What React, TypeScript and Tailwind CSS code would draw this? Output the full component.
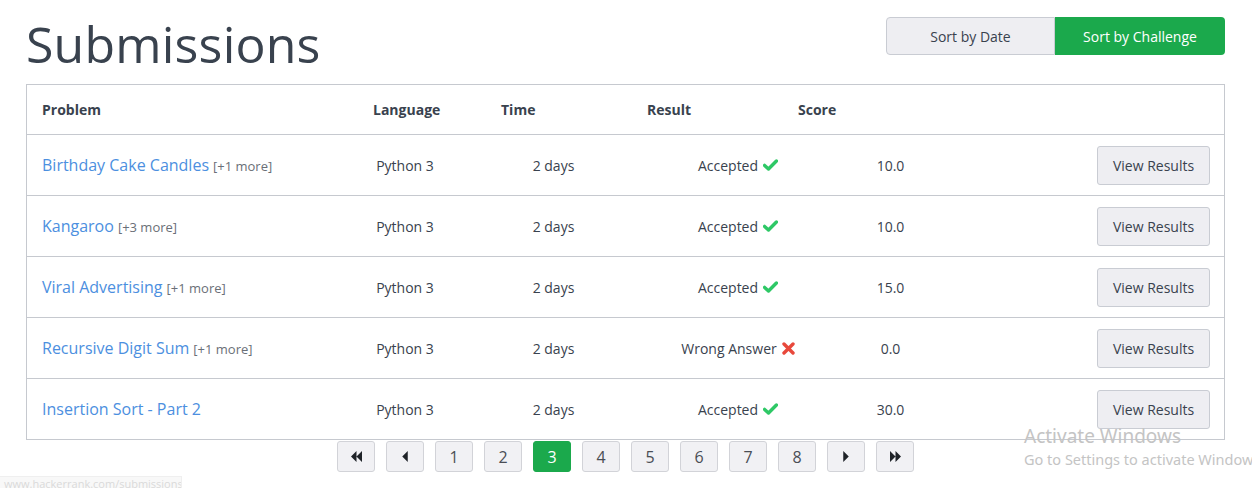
import React from 'react';

const font = { fontFamily: '"Open Sans", "Noto Sans", sans-serif' };

interface Submission {
  problem: string;
  more?: string;
  language: string;
  time: string;
  result: string;
  ok: boolean;
  score: string;
}

const rows: Submission[] = [
  { problem: 'Birthday Cake Candles', more: '[+1 more]', language: 'Python 3', time: '2 days', result: 'Accepted', ok: true, score: '10.0' },
  { problem: 'Kangaroo', more: '[+3 more]', language: 'Python 3', time: '2 days', result: 'Accepted', ok: true, score: '10.0' },
  { problem: 'Viral Advertising', more: '[+1 more]', language: 'Python 3', time: '2 days', result: 'Accepted', ok: true, score: '15.0' },
  { problem: 'Recursive Digit Sum', more: '[+1 more]', language: 'Python 3', time: '2 days', result: 'Wrong Answer', ok: false, score: '0.0' },
  { problem: 'Insertion Sort - Part 2', language: 'Python 3', time: '2 days', result: 'Accepted', ok: true, score: '30.0' },
];

function Check() {
  return (
    <svg width="15" height="12" viewBox="0 0 15 12" className="ml-[5px] inline-block">
      <path d="M1.6 6.4 L5.5 10 L13.4 2" fill="none" stroke="#2ec866" strokeWidth="3.4" strokeLinejoin="round" strokeLinecap="round" />
    </svg>
  );
}

function Cross() {
  return (
    <svg width="13" height="13" viewBox="0 0 13 13" className="ml-[5px] inline-block">
      <path d="M2 2 L11 11 M11 2 L2 11" fill="none" stroke="#e8483b" strokeWidth="3.4" strokeLinecap="round" />
    </svg>
  );
}

function PageButton({ children, active }: { children: React.ReactNode; active?: boolean }) {
  return (
    <div
      className={
        active
          ? 'w-[38px] h-[31px] flex items-center justify-center rounded-[3px] border border-[#1ba94c] bg-[#1ba94c] text-white text-[16px]'
          : 'w-[38px] h-[31px] flex items-center justify-center rounded-[3px] border border-[#d2d3d8] bg-[#f1f1f4] text-[#4a4e55] text-[16px]'
      }
    >
      {children}
    </div>
  );
}

function Arrow({ dir, double }: { dir: 'l' | 'r'; double?: boolean }) {
  const one = dir === 'l' ? 'M6 0 L0 6 L6 12 Z' : 'M0 0 L6 6 L0 12 Z';
  const two = dir === 'l' ? 'M6 0 L0 6 L6 12 Z M12 0 L6 6 L12 12 Z' : 'M0 0 L6 6 L0 12 Z M6 0 L12 6 L6 12 Z';
  return (
    <svg width={double ? 11 : 6} height="11" viewBox={double ? '0 0 12 12' : '0 0 6 12'}>
      <path d={double ? two : one} fill="#1f2328" />
    </svg>
  );
}

export default function App() {
  return (
    <div className="relative w-[1252px] h-[488px] bg-white overflow-hidden text-[#39424e]" style={font}>
      <div className="pl-[26px] pr-[27px]">
        <div className="flex items-start justify-between h-[84px]">
          <h1 className="text-[50px] leading-none mt-[19px] text-[#39424e] tracking-[0.2px]">Submissions</h1>
          <div className="flex mt-[17px] h-[38px] text-[14px]">
            <div className="w-[169px] flex items-center justify-center bg-[#eeeef2] border border-[#c9ccd3] rounded-l-[4px] text-[#39424e]">
              Sort by Date
            </div>
            <div className="w-[170px] flex items-center justify-center bg-[#1ba94c] text-white rounded-r-[4px]">
              Sort by Challenge
            </div>
          </div>
        </div>

        <div className="border border-[#c6c9cf]">
          <div className="flex items-center h-[49px] text-[14px] font-bold text-[#39424e]">
            <div className="w-[346px] pl-[15px]">Problem</div>
            <div className="w-[128px]">Language</div>
            <div className="w-[146px]">Time</div>
            <div className="w-[151px]">Result</div>
            <div>Score</div>
          </div>
          {rows.map((r) => (
            <div key={r.problem} className="flex items-center h-[61px] border-t border-[#c6c9cf] text-[14px] text-[#39424e]">
              <div className="w-[318px] pl-[15px] whitespace-nowrap">
                <span className="text-[16px] text-[#4c8fe0]">{r.problem}</span>
                {r.more && <span className="ml-[4px] text-[13px] text-[#6a6f77]">{r.more}</span>}
              </div>
              <div className="w-[120px] text-center">{r.language}</div>
              <div className="w-[177px] text-center">{r.time}</div>
              <div className="w-[192px] flex items-center justify-center">
                {r.result}
                {r.ok ? <Check /> : <Cross />}
              </div>
              <div className="w-[113px] text-center">{r.score}</div>
              <div className="flex-1 flex justify-end pr-[14px]">
                <div className="w-[113px] h-[39px] flex items-center justify-center rounded-[3px] border border-[#c9ccd3] bg-[#eeeef2] text-[#39424e]">
                  View Results
                </div>
              </div>
            </div>
          ))}
        </div>

        <div className="flex justify-center gap-[11px] mt-[1px]">
          <PageButton><Arrow dir="l" double /></PageButton>
          <PageButton><Arrow dir="l" /></PageButton>
          <PageButton>1</PageButton>
          <PageButton>2</PageButton>
          <PageButton active>3</PageButton>
          <PageButton>4</PageButton>
          <PageButton>5</PageButton>
          <PageButton>6</PageButton>
          <PageButton>7</PageButton>
          <PageButton>8</PageButton>
          <PageButton><Arrow dir="r" /></PageButton>
          <PageButton><Arrow dir="r" double /></PageButton>
        </div>
      </div>

      {/* browser status bar */}
      <div className="absolute left-0 top-[476px] w-[182px] h-[12px] bg-[#f8f8f8] border-t border-r border-[#efefef] pl-[4px] text-[11px] leading-[14px] text-[#dadada] whitespace-nowrap overflow-hidden">
        www.hackerrank.com/submissions
      </div>

      {/* windows watermark */}
      <div className="absolute left-[1024px] top-[423px] text-[#c4c4c4] whitespace-nowrap pointer-events-none" style={{ fontFamily: '"Noto Sans", "Open Sans", sans-serif' }}>
        <div className="text-[19px] leading-[26px]">Activate Windows</div>
        <div className="text-[14.5px] leading-[20px]">Go to Settings to activate Windows.</div>
      </div>
    </div>
  );
}
